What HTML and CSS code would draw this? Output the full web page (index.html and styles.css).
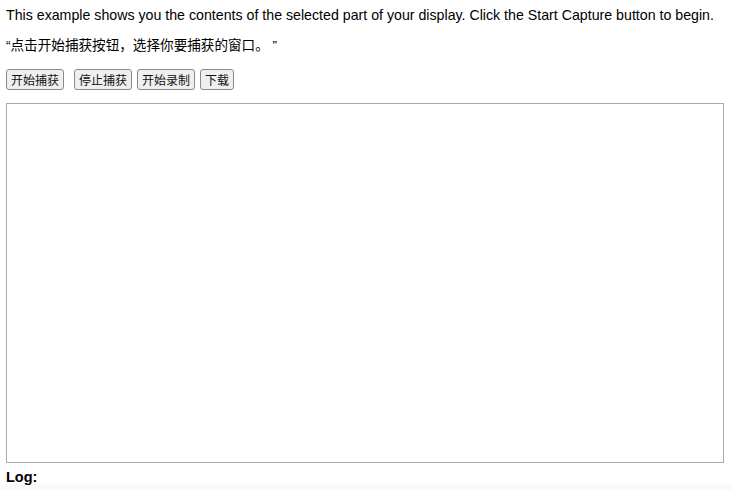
FILE: index.html
```html
<!DOCTYPE html>
<html lang="zh">
<head>
  <meta charset="utf-8">
  <meta name="viewport" content="width=device-width, initial-scale=1.0">
  <title>Screen Capture</title>
  <link rel="stylesheet" href="styles.css">
</head>
<body>
  <p class="intro">This example shows you the contents of the selected part of your display. Click the Start Capture button to begin.</p>
  <p class="intro intro-zh">“点击开始捕获按钮，选择你要捕获的窗口。 ”</p>
  <div class="controls">
    <button id="start" class="btn btn-first">开始捕获</button>
    <button id="stop" class="btn">停止捕获</button>
    <button id="record" class="btn">开始录制</button>
    <button id="download" class="btn">下载</button>
  </div>
  <div id="video" class="video"></div>
  <strong class="log-label">Log:</strong>
  <pre id="log" class="log"></pre>
</body>
</html>
```
FILE: styles.css
```css
body {
  font-family: 'Liberation Sans', 'Noto Sans CJK SC', sans-serif;
  margin: 0;
  padding: 6px 6px 0;
  color: #000;
  background-color: #fff;
  overflow: hidden;
}
.intro {
  margin: 0 0 13px;
  font-size: 14.2px;
  line-height: 18px;
  white-space: nowrap;
}
.intro-zh {
  font-size: 13.6px;
}
.controls {
  display: flex;
  gap: 5px;
  margin: 14px 0 13px;
}
.btn {
  font-family: 'Noto Sans CJK SC', sans-serif;
  font-size: 12px;
  height: 21px;
  padding: 0 4px;
  line-height: 19px;
  background-color: #efefef;
  border: 1px solid #8a8a8a;
  border-radius: 3px;
  color: #111;
}
.btn-first {
  margin-right: 5px;
}
.video {
  width: 718px;
  height: 360px;
  box-sizing: border-box;
  border: 1px solid #aaa;
}
.log-label {
  display: block;
  font-size: 14.5px;
  line-height: 14px;
  margin-top: 7px;
}
.log {
  margin: 0 -6px;
  height: 6px;
  background-color: #fafafa;
}
```
